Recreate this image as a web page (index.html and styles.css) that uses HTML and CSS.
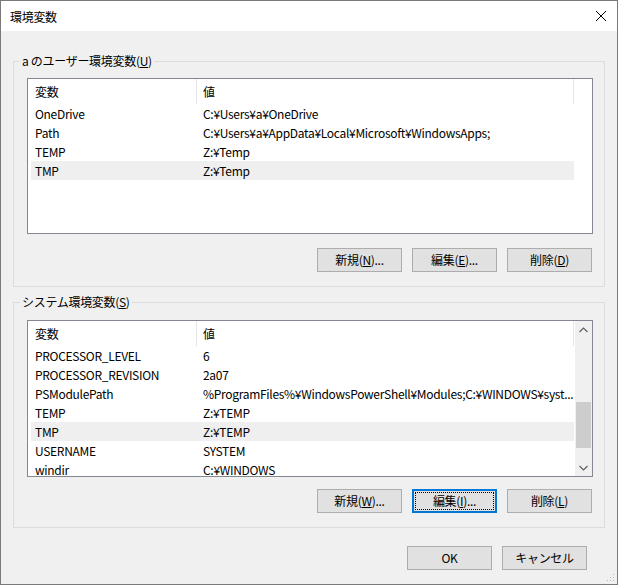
FILE: index.html
```html
<!DOCTYPE html>
<html lang="ja">
<head>
<meta charset="utf-8">
<title>環境変数</title>
<link rel="stylesheet" href="styles.css">
</head>
<body>
<div class="window">
  <div class="titlebar">
    <span class="title">環境変数</span>
    <span class="close">
      <svg width="12" height="12" viewBox="0 0 12 12"><path d="M1 1 L11 11 M11 1 L1 11" stroke="#000" stroke-width="1" fill="none"/></svg>
    </span>
  </div>
  <div class="content">
    <fieldset class="group group-user">
      <legend>a のユーザー環境変数(<u>U</u>)</legend>
      <div class="list list-user">
        <div class="list-main">
          <div class="list-header">
            <div class="hcell hcell-name">変数</div>
            <div class="hcell hcell-value">値</div>
          </div>
          <div class="row"><div class="cell cell-name">OneDrive</div><div class="cell cell-value">C:¥Users¥a¥OneDrive</div></div>
          <div class="row"><div class="cell cell-name">Path</div><div class="cell cell-value">C:¥Users¥a¥AppData¥Local¥Microsoft¥WindowsApps;</div></div>
          <div class="row"><div class="cell cell-name">TEMP</div><div class="cell cell-value">Z:¥Temp</div></div>
          <div class="row row-selected"><div class="cell cell-name">TMP</div><div class="cell cell-value">Z:¥Temp</div></div>
        </div>
      </div>
      <div class="button-row">
        <button class="btn">新規(<u>N</u>)...</button>
        <button class="btn">編集(<u>E</u>)...</button>
        <button class="btn">削除(<u>D</u>)</button>
      </div>
    </fieldset>

    <fieldset class="group group-system">
      <legend>システム環境変数(<u>S</u>)</legend>
      <div class="list list-system">
        <div class="list-main">
          <div class="list-header">
            <div class="hcell hcell-name">変数</div>
            <div class="hcell hcell-value">値</div>
          </div>
          <div class="row"><div class="cell cell-name">PROCESSOR_LEVEL</div><div class="cell cell-value">6</div></div>
          <div class="row"><div class="cell cell-name">PROCESSOR_REVISION</div><div class="cell cell-value">2a07</div></div>
          <div class="row"><div class="cell cell-name">PSModulePath</div><div class="cell cell-value">%ProgramFiles%¥WindowsPowerShell¥Modules;C:¥WINDOWS¥syst...</div></div>
          <div class="row"><div class="cell cell-name">TEMP</div><div class="cell cell-value">Z:¥TEMP</div></div>
          <div class="row row-selected"><div class="cell cell-name">TMP</div><div class="cell cell-value">Z:¥TEMP</div></div>
          <div class="row"><div class="cell cell-name">USERNAME</div><div class="cell cell-value">SYSTEM</div></div>
          <div class="row"><div class="cell cell-name">windir</div><div class="cell cell-value">C:¥WINDOWS</div></div>
        </div>
        <div class="scrollbar">
          <div class="sb-arrow">
            <svg width="9" height="6" viewBox="0 0 9 6"><path d="M0.5 5 L4.5 1 L8.5 5" stroke="#606060" stroke-width="1.2" fill="none"/></svg>
          </div>
          <div class="sb-track">
            <div class="sb-thumb"></div>
          </div>
          <div class="sb-arrow">
            <svg width="9" height="6" viewBox="0 0 9 6"><path d="M0.5 1 L4.5 5 L8.5 1" stroke="#606060" stroke-width="1.2" fill="none"/></svg>
          </div>
        </div>
      </div>
      <div class="button-row button-row-system">
        <button class="btn">新規(<u>W</u>)...</button>
        <button class="btn btn-focused"><span class="focus-rect">編集(<u>I</u>)...</span></button>
        <button class="btn">削除(<u>L</u>)</button>
      </div>
    </fieldset>

    <div class="dialog-buttons">
      <button class="btn">OK</button>
      <button class="btn">キャンセル</button>
    </div>
  </div>
  <div class="grip">
    <svg width="12" height="12" viewBox="0 0 12 12">
      <rect x="9" y="3" width="1" height="1" fill="#b8b8b8"/>
      <rect x="6" y="6" width="1" height="1" fill="#b8b8b8"/>
      <rect x="9" y="6" width="1" height="1" fill="#b8b8b8"/>
      <rect x="3" y="9" width="1" height="1" fill="#b8b8b8"/>
      <rect x="6" y="9" width="1" height="1" fill="#b8b8b8"/>
      <rect x="9" y="9" width="1" height="1" fill="#b8b8b8"/>
    </svg>
  </div>
</div>
</body>
</html>
```

FILE: styles.css
```css
* { box-sizing: border-box; }

html, body {
  margin: 0;
  padding: 0;
  background: #ffffff;
}

body {
  font-family: "Noto Sans CJK JP", "Noto Sans", sans-serif;
  font-size: 12px;
  line-height: 16px;
  letter-spacing: -0.3px;
  color: #000;
}

.window {
  position: relative;
  width: 618px;
  height: 585px;
  border: 1px solid #7a7a7a;
  background: #f0f0f0;
  display: flex;
  flex-direction: column;
  overflow: hidden;
}

.titlebar {
  height: 30px;
  flex: none;
  background: #ffffff;
  display: flex;
  align-items: center;
  justify-content: space-between;
  padding: 0 10px 0 9px;
}

.title {
  font-size: 12px;
  padding-top: 1px;
}

.close {
  display: flex;
  width: 12px;
  height: 12px;
}

.content {
  flex: 1;
  padding: 0 12px;
  display: flex;
  flex-direction: column;
}

.group {
  margin: 0;
  border: 1px solid #dcdcdc;
  min-width: 0;
}

.group legend {
  padding: 0 2px;
  margin-left: -7px;
  line-height: 16px;
  height: 16px;
}

.group-user {
  margin-top: 22px;
  padding: 9px 11px 14px 13px;
}

.group-system {
  margin-top: 7px;
  padding: 10px 11px 14px 13px;
}

.list {
  width: 566px;
  background: #ffffff;
  border: 1px solid #828790;
  display: flex;
  overflow: hidden;
}

.list-user { height: 156px; }
.list-system { height: 157px; }

.list-main {
  flex: 1;
  min-width: 0;
  overflow: hidden;
}

.list-header {
  display: flex;
  height: 25px;
  align-items: stretch;
}

.hcell {
  display: flex;
  align-items: center;
  border-right: 1px solid #e5e5e5;
  white-space: nowrap;
}

.hcell-name {
  width: 169px;
  padding-left: 7px;
}

.hcell-value {
  width: 377px;
  padding-left: 6px;
}

.row {
  display: flex;
  height: 19px;
  margin: 0 18px 0 3px;
  align-items: center;
  white-space: nowrap;
}

.list-system .row {
  margin-right: 1px;
}

.row-selected {
  background: #efefef;
}

.cell {
  overflow: hidden;
  white-space: nowrap;
}

.cell-name {
  width: 165px;
  flex: none;
  padding-left: 4px;
}

.cell-value {
  flex: 1;
  min-width: 0;
  padding-left: 7px;
}

.scrollbar {
  width: 17px;
  flex: none;
  background: #f0f0f0;
  display: flex;
  flex-direction: column;
}

.sb-arrow {
  height: 17px;
  flex: none;
  display: flex;
  align-items: center;
  justify-content: center;
}

.sb-track {
  flex: 1;
  display: flex;
  flex-direction: column;
  padding: 64px 1px 10px 1px;
}

.sb-thumb {
  height: 46px;
  background: #cdcdcd;
}

.button-row {
  display: flex;
  justify-content: flex-end;
  gap: 10px;
  margin-top: 14px;
  margin-right: 1px;
}

.button-row-system {
  margin-top: 12px;
}

.btn {
  width: 85px;
  height: 24px;
  padding: 0;
  margin: 0;
  font-family: inherit;
  font-size: 12px;
  line-height: 16px;
  letter-spacing: -0.3px;
  color: #000;
  background: #e1e1e1;
  border: 1px solid #adadad;
  display: flex;
  align-items: center;
  justify-content: center;
}

.btn-focused {
  border: 2px solid #0078d7;
  padding: 1px;
}

.focus-rect {
  width: 100%;
  height: 100%;
  display: flex;
  align-items: center;
  justify-content: center;
  outline: 1px dotted #000;
  outline-offset: -1px;
}

.dialog-buttons {
  display: flex;
  justify-content: flex-end;
  gap: 10px;
  margin-top: 18px;
  margin-right: 18px;
}

.grip {
  position: absolute;
  right: 1px;
  bottom: 1px;
  width: 12px;
  height: 12px;
  display: flex;
}
```
